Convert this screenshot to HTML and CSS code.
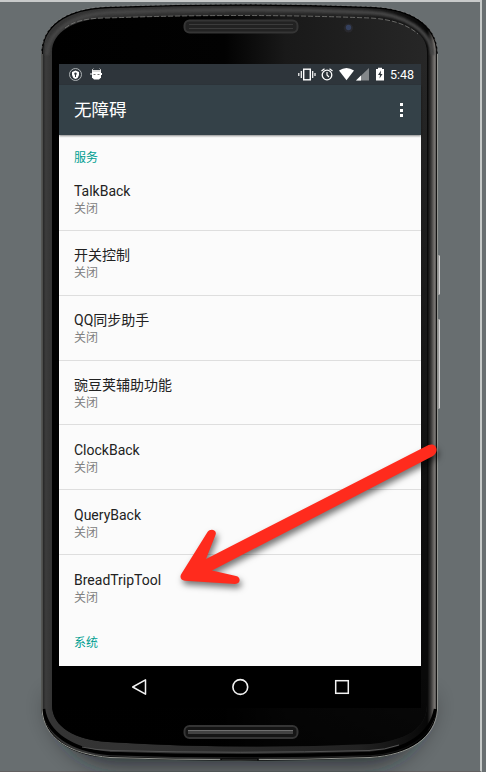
FILE: index.html
```html
<!DOCTYPE html>
<html lang="zh-CN">
<head>
<meta charset="utf-8">
<title>无障碍</title>
<link rel="stylesheet" href="styles.css">
</head>
<body>
<main class="stage">
  <svg class="device" width="486" height="772" viewBox="0 0 486 772" aria-hidden="true">
    <defs>
      <linearGradient id="rim" x1="41" x2="438" y1="0" y2="0" gradientUnits="userSpaceOnUse">
        <stop offset="0" stop-color="#181818"/><stop offset=".012" stop-color="#3c3c3c"/><stop offset=".026" stop-color="#343434"/><stop offset=".2" stop-color="#333"/><stop offset=".8" stop-color="#222"/><stop offset=".973" stop-color="#070707"/><stop offset=".982" stop-color="#353433"/><stop offset=".991" stop-color="#777471"/><stop offset="1" stop-color="#333"/>
      </linearGradient>
      <linearGradient id="face" x1="50" x2="430" y1="20" y2="20" gradientUnits="userSpaceOnUse">
        <stop offset="0" stop-color="#000"/><stop offset=".46" stop-color="#020202"/><stop offset=".62" stop-color="#191919"/><stop offset="1" stop-color="#272727"/>
      </linearGradient>
      <linearGradient id="fade" x1="0" x2="0" y1="0" y2="1">
        <stop offset="0" stop-color="#000" stop-opacity="0"/><stop offset=".6" stop-color="#000" stop-opacity=".55"/><stop offset="1" stop-color="#000" stop-opacity=".85"/>
      </linearGradient>
      <filter id="soft" filterUnits="userSpaceOnUse" x="-40" y="600" width="570" height="250"><feGaussianBlur stdDeviation="13"/></filter>
      <filter id="blur1" filterUnits="userSpaceOnUse" x="0" y="0" width="486" height="772"><feGaussianBlur stdDeviation="1.3"/></filter>
    </defs>
    <path d="M50 700Q65 755 110 762H370Q415 757 430 700Z" fill="#181e20" opacity=".85" filter="url(#soft)"/>
    <path d="M437 255h3v40h-3zM437 319h3v90h-3z" fill="#999"/>
    <path d="M439.500 256v38M439.500 320v88" stroke="#d0d0d0"/>
    <path d="M42 54C42 26 66 9 108 7.500Q240 2.500 371 7.500C412 9 437 26 437 54V710C434 736 410 754 374 757Q240 763 108 757C68 755 45 736 42 710Z" fill="url(#rim)" stroke="#000" stroke-width="1.500"/>
    <path d="M47 55C48 31 73 14 110 12.500Q240 7 369 12.500C405 14 431 31 432.500 55" fill="none" stroke="#444" stroke-width="4" filter="url(#blur1)"/>
    <path d="M52 52C52 32 74 19 106 18Q240 13 372 18C405 20 427 32 427 52V706C426 729 407 740 371 744Q240 750 108 742C75 740 52 727 52 705Z" fill="url(#face)"/>
    <path d="M52 60H427V706C426 729 407 740 371 744Q240 750 108 742C75 740 52 727 52 705Z" fill="url(#fade)"/>
    <path d="M65 28C75 20 90 18 108 18Q240 13 370 18C390 19 407 24 418 34" fill="none" stroke="#858583" stroke-width=".7" stroke-dasharray="5 2"/>
    <path d="M43.500 709C47 733 71 750 110 753.500Q240 758 370 753.500C407 751 431 734 435.500 709" fill="none" stroke="#000" stroke-width="3.500"/>
    <path d="M42 54V710C44 738 69 754 110 757.500Q240 762 370 757.500C410 755 435 738 437.500 710V54" fill="none" stroke="#92948f" stroke-width="1"/>
    <path d="M82 747Q95 750 112 750.500Q240 754 369 750.500Q385 750 399 745" fill="none" stroke="#555" stroke-width="1"/>
    <path d="M41.500 54C41.500 25 66 8 108 6.500Q240 1.500 371 6.500C412 8 437.500 25 437.500 54" fill="none" stroke="#888" stroke-width=".6" stroke-dasharray="3 2"/>
    <rect x="184.500" y="20.500" width="113" height="12" rx="5" fill="#222" stroke="#353535" stroke-width="2"/>
    <path d="M189 24.500H293M189 28.500H293" stroke="#3b3b3b"/>
    <rect x="184.500" y="726" width="113" height="12" rx="5" fill="#151515" stroke="#353535" stroke-width="2"/>
    <path d="M188 732H293" stroke="#424242" stroke-width="4"/><path d="M188 730.500H293" stroke="#707070"/>
    <circle cx="348.500" cy="28" r="5" fill="#28282d" stroke="#202020"/><circle cx="348.500" cy="27.500" r="2.700" fill="#34405e"/>
    <path d="M221 760V759H258V760.500" fill="none" stroke="#050505" stroke-width="1.500"/>
  </svg>

  <section class="screen">
    <div class="status">
      <svg class="notices" width="40" height="21" viewBox="0 0 40 21" aria-hidden="true">
        <circle cx="7.500" cy="10.500" r="6" fill="none" stroke="#b9bdc0" stroke-width=".9"/>
        <path d="M7.500 6.500L11 8V11Q10.500 14 7.500 15Q4.500 14 4 11V8Z" fill="#fff"/>
        <circle cx="7.500" cy="9.700" r="1.200" fill="#2e353b"/><path d="M7.500 10v3" stroke="#2e353b"/>
        <path d="M24 6H33V13.500L31 15.500H26L24 13.500Z" fill="#fff"/><path d="M24 6L25.500 4.500M31.500 4.500l1.500 1.500M24.500 7h8" stroke="#bbb"/>
        <path d="M23 9v2M33.500 9v2" stroke="#fff"/><path d="M25.500 10.500h2M29.500 10.500h2" stroke="#777"/>
      </svg>
      <svg class="signals" width="92" height="21" viewBox="0 0 92 21" aria-hidden="true">
        <rect x="5.700" y="5.200" width="6.600" height="10.600" fill="none" stroke="#fff" stroke-width="1.400"/>
        <path d="M3.300 7v7M14.700 7v7M.8 9v3M17 9v3" stroke="#fff" stroke-width="1.200"/>
        <circle cx="29" cy="11" r="4.800" fill="none" stroke="#fff" stroke-width="1.300"/><path d="M29 8v3l2 2M23.500 7l3-2.300M31.500 4.700l3 2.300" fill="none" stroke="#fff" stroke-width="1.200"/>
        <path d="M41 6.500Q48.500 1.500 56 6.500L48.500 16.200Z" fill="#fff"/>
        <path d="M58 16.500L71 4V16.500Z" fill="#83878a"/><path d="M58 16.500L63 11.500V16.500Z" fill="#fff"/>
        <path d="M78 5H80V3.700H84V5H86V16.500H78Z" fill="#fff"/><path d="M83 6.500L80 11H82L81.500 14.500L84.500 10H82.700Z" fill="#2e353b"/>
      </svg>
      <time class="time">5:48</time>
    </div>
    <header class="appbar">
      <h1 class="title">无障碍</h1>
      <span class="more"><i></i><i></i><i></i></span>
    </header>
    <div class="settings">
      <h2 class="group">服务</h2>
      <ul class="services">
        <li class="service"><b>TalkBack</b><span>关闭</span></li>
        <li class="service"><b>开关控制</b><span>关闭</span></li>
        <li class="service"><b>QQ同步助手</b><span>关闭</span></li>
        <li class="service"><b>豌豆荚辅助功能</b><span>关闭</span></li>
        <li class="service"><b>ClockBack</b><span>关闭</span></li>
        <li class="service"><b>QueryBack</b><span>关闭</span></li>
        <li class="service"><b>BreadTripTool</b><span>关闭</span></li>
      </ul>
      <h2 class="group system">系统</h2>
    </div>
    <nav class="nav">
      <svg width="362" height="42" viewBox="0 0 362 42" aria-hidden="true">
        <path d="M73.700 21L86.500 13.800V28.200Z" fill="none" stroke="#f3f3f3" stroke-width="1.500" stroke-linejoin="round"/>
        <circle cx="181.300" cy="21" r="7.400" fill="none" stroke="#f3f3f3" stroke-width="1.600"/>
        <rect x="276.700" y="14.700" width="12.600" height="12.600" fill="none" stroke="#f3f3f3" stroke-width="1.500"/>
      </svg>
    </nav>
  </section>

  <svg class="pointer" width="486" height="772" viewBox="0 0 486 772" aria-hidden="true">
    <path d="M428.500 445L206 559L215.300 535.500C218 530 210.500 527.500 207.500 532L181 574.500C179.500 578 181.500 580.500 185 580.700L235 584C241 584 241 577 236 576L212 570.500L433 456C440 451 436 442 428.500 445Z"/>
  </svg>
</main>
</body>
</html>
```
FILE: styles.css
```css
* { box-sizing: border-box; }
body {
  margin: 0;
  font-family: Roboto, "Noto Sans CJK SC", sans-serif;
  background: #686e70;
}
.stage {
  position: relative;
  width: 486px;
  height: 772px;
  padding: 64px 65px 64px 59px;
  overflow: hidden;
  background: #686e70;
}
.stage::before {
  content: "";
  position: absolute;
  inset: 0 4px 0 0;
  border-top: 2px solid #c8caca;
  border-right: 2px solid #c4c8c7;
  border-bottom: 1px solid #626061;
}
.device, .pointer { position: absolute; left: 0; top: 0; }
.screen {
  position: relative;
  display: flex;
  flex-direction: column;
  height: 644px;
  background: #fbfbfb;
}
.status {
  display: flex;
  align-items: center;
  height: 21px;
  flex: none;
  padding: 0 6px 0 9px;
  background: #2e353b;
  color: #fff;
}
.signals { margin-left: auto; }
.time {
  width: 25px;
  margin-left: 0;
  font-size: 12.500px;
  font-weight: 400;
  line-height: 21px;
  white-space: nowrap;
}
.appbar {
  display: flex;
  align-items: center;
  justify-content: space-between;
  height: 50px;
  flex: none;
  padding: 0 18px 0 15px;
  background: #344148;
  box-shadow: 0 1px 2px #0007;
}
.title {
  margin: 0;
  color: #fff;
  font-size: 17.500px;
  font-weight: 400;
  line-height: 26px;
}
.more { display: flex; flex-direction: column; gap: 2.500px; }
.more i { width: 3px; height: 3px; background: #fff; }
.settings { flex: 1; min-height: 0; padding-top: 15px; }
.group {
  height: 16px;
  margin: 0;
  padding-left: 15px;
  color: #009e91;
  font-size: 12px;
  font-weight: 400;
  line-height: 17px;
}
.services { margin: 0; padding: 0; list-style: none; }
.service {
  height: 64.850px;
  padding: 15.500px 15px 0;
  border-bottom: 1px solid #dedede;
}
.service:last-child { border-bottom: 0; }
.service b, .service span { display: block; font-weight: 400; white-space: nowrap; }
.service b { height: 18px; color: #222; font-size: 14px; line-height: 18px; }
.service span { height: 17px; color: #808080; font-size: 12px; line-height: 18px; }
.system { margin-top: 15px; }
.nav { height: 42px; flex: none; background: #000; }
.nav svg { display: block; }
.pointer path { fill: #ff2b1d; filter: drop-shadow(2px 4px 3px #0008); }
```
